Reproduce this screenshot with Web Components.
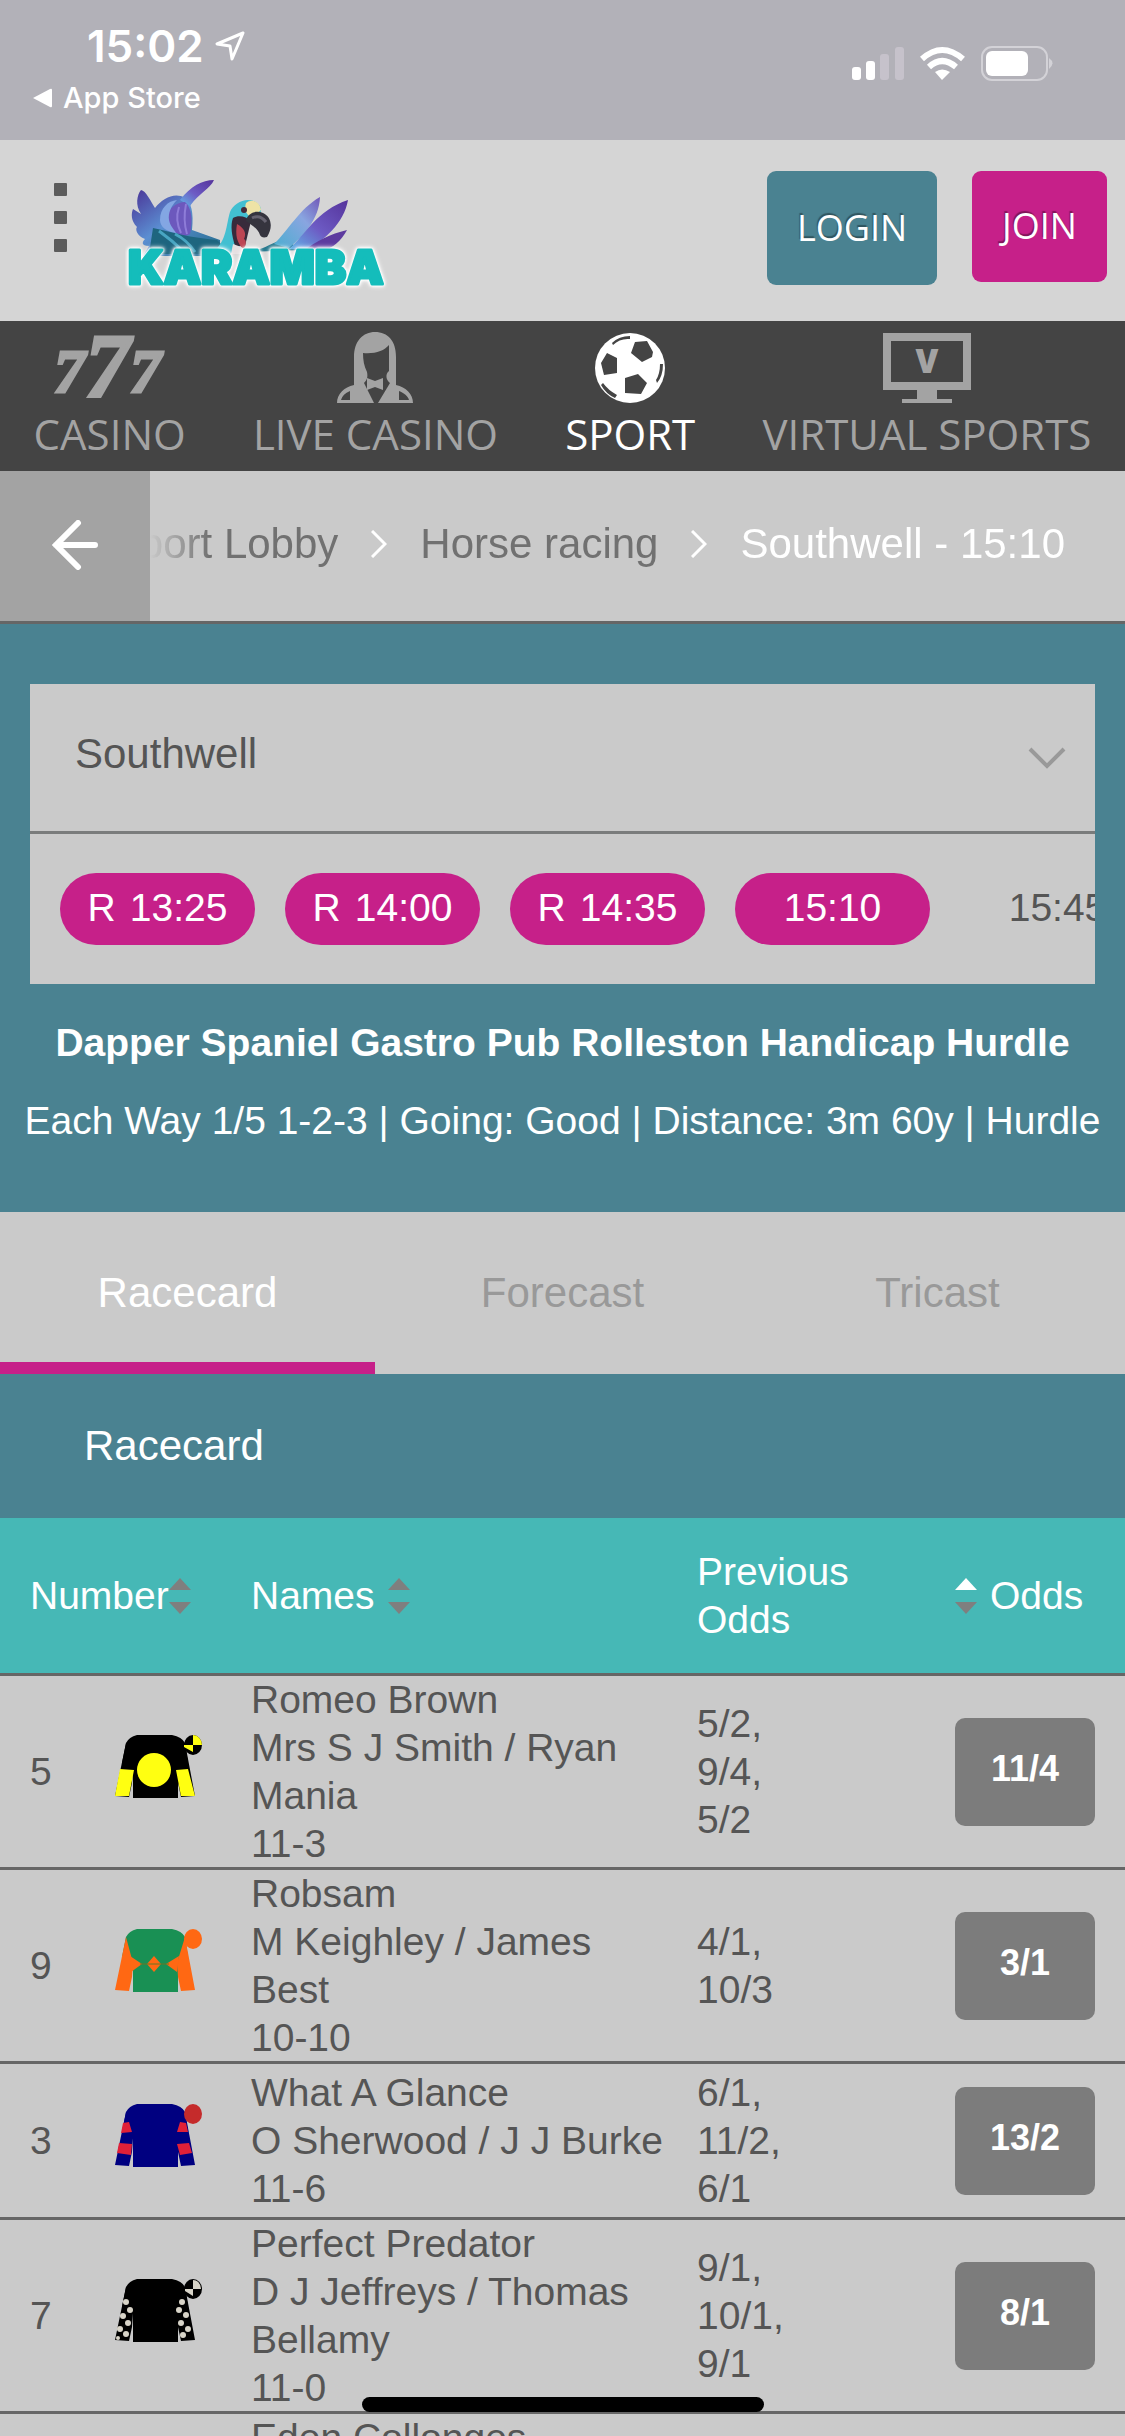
<!DOCTYPE html>
<html lang="en">
    <head>
        <meta charset="UTF-8">
        <meta name="viewport" content="width=device-width, initial-scale=1.0">
        <title>Karamba - Southwell 15:10</title>
        <style>
            html, body {
                margin: 0;
                height: 100%;
            }
            body {
                overflow: hidden;
                background: #cacaca;
                font-family: "Liberation Sans", Arial, sans-serif;
                --teal: #4a8291;
                --aqua: #46b8b6;
                --pink: #c62089;
                --panel: #cacaca;
                --line: #666;
                --text: #555;
            }
        </style>
    </head>
    <body>
        <status-bar time="15:02" back="App Store"></status-bar>
        <site-header></site-header>
        <product-nav>
            <product-link icon="casino">CASINO</product-link>
            <product-link icon="dealer">LIVE CASINO</product-link>
            <product-link icon="ball" active>SPORT</product-link>
            <product-link icon="monitor">VIRTUAL SPORTS</product-link>
        </product-nav>
        <crumb-trail items="Sport Lobby|Horse racing|Southwell - 15:10"></crumb-trail>
        <race-picker course="Southwell" times="R 13:25|R 14:00|R 14:35|15:10|15:45" current="15:10">
            <span slot="title">Dapper Spaniel Gastro Pub Rolleston Handicap Hurdle</span>
            <span slot="details">Each Way 1/5 1-2-3 | Going: Good | Distance: 3m 60y | Hurdle</span>
        </race-picker>
        <race-tabs items="Racecard|Forecast|Tricast"></race-tabs>
        <race-card>Racecard</race-card>
        <home-indicator></home-indicator>

        <script>
            class StatusBar extends HTMLElement {
                connectedCallback() {
                    this.attachShadow({ mode: "open" }).innerHTML = /* html */ `
                        <style>
                            :host {
                                display: flex;
                                justify-content: space-between;
                                align-items: flex-start;
                                box-sizing: border-box;
                                height: 140px;
                                padding: 18px 72px 0 33px;
                                background: #b2b1b8;
                                color: #fff;
                                font-family: Inter, sans-serif;
                            }
                            .clock {
                                display: flex;
                                align-items: center;
                                gap: 11px;
                                padding-left: 54px;
                                font-size: 44px;
                                font-weight: 600;
                                line-height: 56px;
                            }
                            a {
                                display: flex;
                                align-items: center;
                                gap: 10px;
                                margin-top: 8px;
                                color: inherit;
                                font-size: 29px;
                                font-weight: 500;
                                line-height: 32px;
                                text-decoration: none;
                            }
                            .signals {
                                display: flex;
                                gap: 16px;
                                padding-top: 28px;
                            }
                        </style>
                        <div>
                            <div class="clock">${this.getAttribute("time")}
                                <svg width="30" height="30" viewBox="0 0 30 30" fill="none" stroke="#fff" stroke-width="3" stroke-linejoin="round"><path d="M28 2 2 13l13 2 2 13z"/></svg>
                            </div>
                            <a href="#"><svg width="20" height="20" viewBox="0 0 20 20" fill="#fff"><path d="M0 10 17 1q2-1 2 1v16q0 2-2 1z"/></svg>${this.getAttribute("back")}</a>
                        </div>
                        <div class="signals">
                            <svg width="52" height="35" viewBox="0 0 52 35" fill="#fff">
                                <rect y="21" width="9" height="13" rx="3"/>
                                <rect x="14" y="15" width="9" height="19" rx="3"/>
                                <g fill="#c6c2cb"><rect x="28" y="8" width="9" height="26" rx="3"/><rect x="43" y="1" width="9" height="33" rx="3"/></g>
                            </svg>
                            <svg width="45" height="35" viewBox="0 0 45 35" fill="none" stroke="#fff" stroke-width="6">
                                <path d="M2 13Q22 -5 43 13M9 21Q22 9 36 21"/>
                                <path d="M15 26Q22 21 30 26L22 34z" fill="#fff" stroke="none"/>
                            </svg>
                            <svg width="72" height="35" viewBox="0 0 72 35">
                                <rect x="1" y="1" width="65" height="33" rx="10" fill="none" stroke="#d3d2d7" stroke-width="2"/>
                                <rect x="5" y="5" width="42" height="25" rx="6" fill="#fff"/>
                                <path d="M68 12q7 5 0 11z" fill="#d3d2d7"/>
                            </svg>
                        </div>
                    `;
                }
            }

            class KarambaLogo extends HTMLElement {
                connectedCallback() {
                    this.attachShadow({ mode: "open" }).innerHTML = /* html */ `
                        <style>
                            :host { display: block; }
                            svg { display: block; }
                            text {
                                font: 900 47px Inter, sans-serif;
                                fill: #14bdbb;
                                stroke: #14bdbb;
                                stroke-width: 3px;
                                stroke-linejoin: round;
                                filter: drop-shadow(0 0 1px #fff) drop-shadow(0 0 1px #fff) drop-shadow(0 0 2px #fff);
                            }
                        </style>
                        <svg width="268" height="118" viewBox="0 0 268 118" role="img" aria-label="Karamba">
                            <defs>
                                <linearGradient id="wing" x1="0" y1="0" x2="1" y2="1">
                                    <stop offset="0" stop-color="#4a3296"/><stop offset=".45" stop-color="#5b8fd2"/><stop offset="1" stop-color="#216a88"/>
                                </linearGradient>
                                <linearGradient id="feather" x1="1" y1="0" x2="0" y2="1">
                                    <stop offset="0" stop-color="#55339b"/><stop offset=".55" stop-color="#6d5bc4"/><stop offset="1" stop-color="#62b6e8"/>
                                </linearGradient>
                                <linearGradient id="pale" x1="1" y1="0" x2="0" y2="1">
                                    <stop offset="0" stop-color="#7057b8"/><stop offset=".4" stop-color="#89a5e0"/><stop offset="1" stop-color="#4aaed0"/>
                                </linearGradient>
                            </defs>
                            <path d="M16 14c5 1 9 10 14 18 8-10 20-16 30-10 6 4 9 14 7 32l28 10v16H18l6-10c-8 0-7-4-4-7-8-3-10-10-8-12-6-6-6-13-4-18l8 5c-6-9-4-19 0-24z" fill="url(#wing)"/>
                            <path d="M55 24C66 10 77 4 89 4c-4 9-15 13-24 26z" fill="url(#feather)"/>
                            <path d="M38 45c4-12 14-19 22-19 7 6 8 19 5 32-4 3-10 2-13-1-8-1-14-6-14-12z" fill="#6c58bd"/>
                            <path d="M35 44c0-12 8-19 17-20-6 6-9 13-8 20 1 6 5 9 7 13-9-1-16-6-16-13z" fill="#83a6e3"/>
                            <path d="M54 31c-3 9-2 18 2 26M61 28c-2 10-2 20 1 30" fill="none" stroke="#8e7cd8" stroke-width="2"/>
                            <path d="M28 52c18 4 38 10 64 12l14 14H24z" fill="#1e657f"/>
                            <path d="M34 55q14 10 25 21M50 58q12 6 20 18" fill="none" stroke="#48a5c2" stroke-width="3"/>
                            <path d="M88 76c14-11 13-27 17-40 4-10 18-16 27-9 4 3 5 7 3 11l-18 6-3 34z" fill="#42bfd1"/>
                            <path d="M108 42c5-3 13-2 18 3l-6 25h-10c-3-10-5-20-2-28z" fill="#382b3b"/>
                            <path d="M112 48c7 4 10 9 7 15 3 1 2 8-1 10-6-6-8-14-6-25z" fill="#bc4553"/>
                            <path d="M121 27c6-5 14-1 15 7l-9 8c-6-3-8-9-6-15z" fill="#eee3a6"/>
                            <circle cx="119" cy="34" r="3" fill="#452a39"/>
                            <path d="M121 45c1-8 10-11 17-8 9 4 10 15 4 24-4 1-6 0-7-2-2-6-7-9-14-14z" fill="#35343e"/>
                            <path d="M127 42q8-4 14 4" fill="none" stroke="#666370" stroke-width="3"/>
                            <path d="M108 68q12 4 20 10h-22z" fill="#e6dfe1"/>
                            <path d="M124 76c16-3 22-9 35-13l18 11z" fill="#22768c"/>
                            <path d="M149 68c14-13 25-35 46-47-1 23-17 39-31 51z" fill="url(#pale)"/>
                            <path d="M164 73c16-14 28-39 59-49-4 23-24 41-42 50z" fill="url(#feather)"/>
                            <path d="M178 75c14-10 27-17 44-21-6 11-14 18-25 21z" fill="#5d3b9f"/>
                            <text x="3" y="108">KARAMBA</text>
                        </svg>
                    `;
                }
            }

            class SiteHeader extends HTMLElement {
                connectedCallback() {
                    this.attachShadow({ mode: "open" }).innerHTML = /* html */ `
                        <style>
                            :host {
                                display: flex;
                                justify-content: space-between;
                                align-items: flex-start;
                                box-sizing: border-box;
                                height: 181px;
                                padding: 31px 18px 0 54px;
                                background: #d5d5d5;
                            }
                            .brand {
                                display: flex;
                                align-items: flex-start;
                                gap: 58px;
                                padding-top: 5px;
                            }
                            .actions {
                                display: flex;
                                align-items: flex-start;
                                gap: 35px;
                            }
                            button {
                                border: 0;
                                padding: 0;
                                background: none;
                                cursor: pointer;
                            }
                            .action {
                                width: 135px;
                                height: 111px;
                                padding-bottom: 2px;
                                border-radius: 9px;
                                background: var(--pink);
                                color: #fff;
                                font: 36px "Open Sans", sans-serif;
                                text-shadow: -1px -2px 1px rgba(0, 0, 0, .35);
                            }
                            .login {
                                width: 170px;
                                height: 114px;
                                background: var(--teal);
                            }
                        </style>
                        <div class="brand">
                            <button aria-label="Menu">
                                <svg width="13" height="82" viewBox="0 0 13 82" fill="#5c5c5c"><rect y="7" width="13" height="13" rx="1"/><rect y="35" width="13" height="13" rx="1"/><rect y="63" width="13" height="13" rx="1"/></svg>
                            </button>
                            <karamba-logo></karamba-logo>
                        </div>
                        <div class="actions">
                            <button class="action login">LOGIN</button>
                            <button class="action">JOIN</button>
                        </div>
                    `;
                }
            }

            class ProductNav extends HTMLElement {
                connectedCallback() {
                    this.attachShadow({ mode: "open" }).innerHTML = /* html */ `
                        <style>
                            :host { display: block; background: #444; }
                            nav {
                                display: flex;
                                justify-content: space-around;
                                padding: 10px 0 13px;
                            }
                        </style>
                        <nav><slot></slot></nav>
                    `;
                }
            }

            const productIcons = {
                casino: `<svg width="104" height="62" viewBox="0 0 104 62" overflow="visible" fill="currentColor" stroke="currentColor" stroke-width="3" font-family="Liberation Serif" font-weight="700" font-style="italic">
                    <text x="-4" y="55" font-size="62">7<tspan dy="5" font-size="90">7</tspan><tspan dy="-5">7</tspan></text>
                </svg>`,
                dealer: `<svg width="76" height="72" viewBox="0 0 76 72" fill="currentColor" fill-rule="evenodd">
                    <path d="M38 0C51 0 59 9 59 25v28c10 2 17 9 17 18H41l12-20c-4-3-5-9-1-12V13c-5 6-14 9-26 8 0 7 1 13 4 19 1 5 0 8-3 11l10 20H0c0-9 7-16 17-18V25C17 9 26 0 38 0zM13 59c-5 2-8 5-9 9h9zM62 59v9h10c-1-4-5-7-10-9z"/>
                    <path d="M30 46l8 3 8-3v12l-8-3-8 3z"/>
                </svg>`,
                ball: `<svg width="70" height="70" viewBox="0 0 70 70" fill="#444">
                    <circle cx="35" cy="35" r="35" fill="currentColor"/>
                    <path d="M40 9l12-1 6 11-1 5-10 5-11-9zM12 20l10 5v15L9 42 6 30zM30 45l13-4 9 9-6 11-16-1z"/>
                    <path d="M17 10Q24 3 35 3v3Q25 5 18 12zM65 31h3q0 12-6 19l-1-3q4-6 4-16zM8 50q5 7 14 12l-2 3Q11 61 6 52z"/>
                </svg>`,
                monitor: `<svg width="88" height="70" viewBox="0 0 88 70" fill="currentColor" fill-rule="evenodd">
                    <path d="M0 0h88v57H54v9h15v4H19v-4h15v-9H0zM8 8v41h72V8z"/>
                    <text x="44" y="40" font-family="Open Sans" font-size="33" font-weight="800" text-anchor="middle">V</text>
                </svg>`
            };

            class ProductLink extends HTMLElement {
                connectedCallback() {
                    this.attachShadow({ mode: "open" }).innerHTML = /* html */ `
                        <style>
                            :host { display: block; color: #a3a3a3; }
                            :host([active]) { color: #fff; }
                            a {
                                display: flex;
                                flex-direction: column;
                                align-items: center;
                                gap: 5px;
                                color: inherit;
                                font: 42px/48px "Open Sans", sans-serif;
                                text-decoration: none;
                                white-space: nowrap;
                            }
                            .icon {
                                display: flex;
                                align-items: center;
                                height: 74px;
                            }
                        </style>
                        <a href="#"><span class="icon" aria-hidden="true">${productIcons[this.getAttribute("icon")]}</span><slot></slot></a>
                    `;
                }
            }

            class CrumbTrail extends HTMLElement {
                connectedCallback() {
                    const items = this.getAttribute("items").split("|");
                    const arrow = `<svg width="16" height="28" viewBox="0 0 16 28" fill="none" stroke="#fff" stroke-width="3"><path d="M1 1l13 13L1 27"/></svg>`;
                    this.attachShadow({ mode: "open" }).innerHTML = /* html */ `
                        <style>
                            :host {
                                display: flex;
                                height: 150px;
                                border-bottom: 3px solid var(--line);
                                background: var(--panel);
                            }
                            button {
                                flex: none;
                                width: 150px;
                                border: 0;
                                padding: 0;
                                background: #a3a3a3;
                            }
                            nav {
                                display: flex;
                                flex: 1;
                                align-items: center;
                                justify-content: flex-end;
                                gap: 33px;
                                min-width: 0;
                                overflow: hidden;
                                padding: 0 60px 4px 0;
                                -webkit-mask-image: linear-gradient(to right, transparent, #000 60px);
                                mask-image: linear-gradient(to right, transparent, #000 60px);
                            }
                            a {
                                flex: none;
                                color: #717171;
                                font-size: 42px;
                                line-height: 48px;
                                text-decoration: none;
                            }
                            a:last-child { color: #fff; }
                            svg { flex: none; }
                        </style>
                        <button aria-label="Back">
                            <svg width="46" height="50" viewBox="0 0 46 50" fill="none" stroke="#fff" stroke-width="6" stroke-linecap="round"><path d="M43 25H4M26 3L4 25l22 22"/></svg>
                        </button>
                        <nav aria-label="Breadcrumb">${items.map(item => `<a href="#">${item}</a>`).join(arrow)}</nav>
                    `;
                }
            }

            class RacePicker extends HTMLElement {
                connectedCallback() {
                    const current = this.getAttribute("current");
                    const times = this.getAttribute("times").split("|");
                    // Races that have a result (R) and the open race are filled
                    const pills = times.map(time => {
                        const filled = time.startsWith("R") || time === current;
                        return `<button class="${filled ? "filled" : ""}">${time.split(" ").map(part => `<span>${part}</span>`).join(" ")}</button>`;
                    }).join("");
                    this.attachShadow({ mode: "open" }).innerHTML = /* html */ `
                        <style>
                            :host {
                                display: block;
                                box-sizing: border-box;
                                height: 588px;
                                padding: 60px 0 0;
                                background: var(--teal);
                                color: #fff;
                                text-align: center;
                            }
                            .card {
                                margin: 0 30px;
                                background: var(--panel);
                            }
                            .course {
                                display: grid;
                                align-items: center;
                                height: 147px;
                                border-bottom: 3px solid #7a7c7c;
                            }
                            .course > * { grid-area: 1 / 1; }
                            select {
                                width: 100%;
                                height: 147px;
                                appearance: none;
                                border: 0;
                                padding: 0 90px 8px 45px;
                                background: none;
                                color: var(--text);
                                font: 42px/48px "Liberation Sans", Arial, sans-serif;
                            }
                            .course svg {
                                justify-self: end;
                                margin-right: 29px;
                                pointer-events: none;
                            }
                            .times {
                                display: flex;
                                gap: 30px;
                                overflow: hidden;
                                padding: 39px 0 39px 30px;
                            }
                            button {
                                display: flex;
                                flex: none;
                                align-items: center;
                                justify-content: center;
                                gap: 14px;
                                width: 195px;
                                height: 72px;
                                border: 0;
                                border-radius: 36px;
                                padding: 0 0 2px;
                                background: none;
                                color: var(--text);
                                font: 39px/48px "Liberation Sans", Arial, sans-serif;
                            }
                            .filled { background: var(--pink); color: #fff; }
                            h1, p {
                                margin: 0;
                                font-size: 39px;
                                line-height: 48px;
                                white-space: nowrap;
                            }
                            h1 { margin: 35px 0 30px; }
                        </style>
                        <div class="card">
                            <div class="course">
                                <select aria-label="Racecourse"><option>${this.getAttribute("course")}</option></select>
                                <svg width="38" height="22" viewBox="0 0 38 22" fill="none" stroke="#999" stroke-width="4"><path d="M2 2l17 17L36 2"/></svg>
                            </div>
                            <div class="times">${pills}</div>
                        </div>
                        <h1><slot name="title"></slot></h1>
                        <p><slot name="details"></slot></p>
                    `;
                }
            }

            class RaceTabs extends HTMLElement {
                connectedCallback() {
                    const items = this.getAttribute("items").split("|");
                    this.attachShadow({ mode: "open" }).innerHTML = /* html */ `
                        <style>
                            :host { display: block; background: var(--panel); }
                            div { display: grid; grid-template-columns: repeat(3, 1fr); }
                            button {
                                height: 162px;
                                border: 0;
                                padding: 0;
                                background: none;
                                color: #999;
                                font: 42px/48px "Liberation Sans", Arial, sans-serif;
                            }
                            button[aria-selected="true"] {
                                box-shadow: inset 0 -12px var(--pink);
                                color: #fff;
                            }
                        </style>
                        <div role="tablist">
                            ${items.map((item, i) => `<button role="tab" aria-selected="${i === 0}">${item}</button>`).join("")}
                        </div>
                    `;
                }
            }

            const silks = {
                black: { body: "#000", sleeve: "#000", cap: "#000",
                    extra: `<g fill="#ff1"><path d="M5 34l14 1-5 26H0zM61 35l12-1 7 27H66z"/><ellipse cx="39" cy="35" rx="17" ry="17"/><path d="M78 10V0a9 10 0 0 1 9 10zM78 10v7l-9-5v-2z"/></g>` },
                green: { body: "#199054", sleeve: "#ff6813", cap: "#ff6813",
                    extra: `<path d="M39 27l7 8-7 8-7-8zM15 27l12 8-11 8zM64 27l-13 8 11 8z" fill="#ff6813"/><path d="M25 35h29" stroke="#6b7424" stroke-width="1"/>` },
                blue: { body: "#000080", sleeve: "#000080", cap: "#c52b2b",
                    extra: `<path d="M8 19l6-1 3 10-11 1zM62 28l3-10 6 1 2 9zM4 39l13 1-1 11-14-2zM62 40l12-1 3 10-12 2z" fill="#e02038"/>` },
                checked: { body: "#000", sleeve: "#000", cap: "#000",
                    extra: `<g fill="#d8d4c8"><circle cx="11" cy="23" r="3"/><circle cx="15" cy="31" r="3"/><circle cx="8" cy="37" r="3"/><circle cx="13" cy="44" r="3"/><circle cx="5" cy="50" r="3"/><circle cx="11" cy="55" r="3"/><circle cx="3" cy="59" r="2"/><circle cx="67" cy="23" r="3"/><circle cx="64" cy="31" r="3"/><circle cx="71" cy="36" r="3"/><circle cx="66" cy="44" r="3"/><circle cx="73" cy="50" r="3"/><circle cx="68" cy="56" r="3"/><path d="M78 10V1q7 0 8 9zM78 10v7l-8-5v-2z"/></g>` }
            };

            class JockeySilk extends HTMLElement {
                connectedCallback() {
                    const silk = silks[this.getAttribute("colours")];
                    this.attachShadow({ mode: "open" }).innerHTML = /* html */ `
                        <style>
                            :host { display: block; padding-bottom: 12px; }
                            svg { display: block; }
                        </style>
                        <svg width="87" height="63" viewBox="0 0 87 63" aria-hidden="true">
                            <path d="M22 0h35q10 2 13 8l3 20-10 7v28H18V35L7 28l4-20q3-6 11-8z" fill="${silk.body}"/>
                            <path d="M11 8l7 26-1 14-3 14L0 61zM70 8l-8 26 1 14 3 14 14-1z" fill="${silk.sleeve}"/>
                            <ellipse cx="78" cy="10" rx="9" ry="10" fill="${silk.cap}"/>
                            ${silk.extra}
                        </svg>
                    `;
                }
            }

            const runners = [
                { number: 5, silk: "black", name: "Romeo Brown", people: "Mrs S J Smith / Ryan Mania", weight: "11-3", previous: "5/2, 9/4, 5/2", odds: "11/4" },
                { number: 9, silk: "green", name: "Robsam", people: "M Keighley / James Best", weight: "10-10", previous: "4/1, 10/3", odds: "3/1" },
                { number: 3, silk: "blue", name: "What A Glance", people: "O Sherwood / J J Burke", weight: "11-6", previous: "6/1, 11/2, 6/1", odds: "13/2" },
                { number: 7, silk: "checked", name: "Perfect Predator", people: "D J Jeffreys / Thomas Bellamy", weight: "11-0", previous: "9/1, 10/1, 9/1", odds: "8/1" }
            ];

            class RaceCard extends HTMLElement {
                sorter(up = "#7f7f7f") {
                    return `<svg width="22" height="36" viewBox="0 0 22 36" aria-hidden="true"><path d="M11 0l11 12H0z" fill="${up}"/><path d="M0 24h22L11 36z" fill="#7f7f7f"/></svg>`;
                }

                row(runner) {
                    return `
                        <tr>
                            <td class="number">${runner.number}</td>
                            <td><jockey-silk colours="${runner.silk}"></jockey-silk></td>
                            <td class="runner">${runner.name}<br>${runner.people}<br>${runner.weight}</td>
                            <td class="previous">${runner.previous}</td>
                            <td class="odds"><button class="bet">${runner.odds}</button></td>
                        </tr>`;
                }

                connectedCallback() {
                    this.attachShadow({ mode: "open" }).innerHTML = /* html */ `
                        <style>
                            :host { display: block; color: var(--text); }
                            h2 {
                                margin: 0;
                                padding: 48px 84px;
                                background: var(--teal);
                                color: #fff;
                                font-size: 42px;
                                font-weight: 400;
                                line-height: 48px;
                            }
                            table {
                                width: 100%;
                                border-collapse: collapse;
                                table-layout: fixed;
                                font-size: 39px;
                                line-height: 48px;
                            }
                            th, td {
                                height: 154px;
                                padding: 0 0 2px;
                                box-shadow: inset 0 -3px var(--line);
                                text-align: left;
                            }
                            th {
                                height: 156px;
                                background: var(--aqua);
                                color: #fff;
                                font-weight: 400;
                            }
                            button {
                                border: 0;
                                padding: 0;
                                background: none;
                                color: #fff;
                                font: inherit;
                            }
                            .sort { display: flex; align-items: center; }
                            .names { gap: 13px; }
                            .by-odds { gap: 13px; }
                            .number { padding-left: 30px; }
                            .runner { padding-right: 24px; }
                            td.previous { padding-right: 130px; }
                            th.previous { padding-right: 90px; }
                            .odds { padding-right: 30px; }
                            .bet {
                                display: block;
                                width: 100%;
                                height: 108px;
                                border-radius: 10px;
                                padding-bottom: 6px;
                                background: #7c7c7c;
                                font-size: 36px;
                                font-weight: 700;
                            }
                            .next td { vertical-align: top; }
                        </style>
                        <h2><slot></slot></h2>
                        <table>
                            <colgroup>
                                <col style="width: 115px"><col style="width: 136px"><col><col style="width: 258px"><col style="width: 170px">
                            </colgroup>
                            <thead>
                                <tr>
                                    <th class="number" colspan="2"><button class="sort">Number${this.sorter()}</button></th>
                                    <th><button class="sort names">Names${this.sorter()}</button></th>
                                    <th class="previous">Previous Odds</th>
                                    <th class="odds" aria-sort="ascending"><button class="sort by-odds">${this.sorter("#fff")}Odds</button></th>
                                </tr>
                            </thead>
                            <tbody>
                                ${runners.map(this.row).join("")}
                                <tr class="next"><td></td><td></td><td>Eden Collonges</td><td></td><td></td></tr>
                            </tbody>
                        </table>
                    `;
                }
            }

            class HomeIndicator extends HTMLElement {
                connectedCallback() {
                    this.attachShadow({ mode: "open" }).innerHTML = /* html */ `
                        <style>
                            :host {
                                position: fixed;
                                right: 0;
                                bottom: 24px;
                                left: 0;
                                width: 402px;
                                height: 15px;
                                margin: 0 auto;
                                border-radius: 8px;
                                background: #000;
                            }
                        </style>
                    `;
                }
            }

            customElements.define("status-bar", StatusBar);
            customElements.define("karamba-logo", KarambaLogo);
            customElements.define("site-header", SiteHeader);
            customElements.define("product-nav", ProductNav);
            customElements.define("product-link", ProductLink);
            customElements.define("crumb-trail", CrumbTrail);
            customElements.define("race-picker", RacePicker);
            customElements.define("race-tabs", RaceTabs);
            customElements.define("jockey-silk", JockeySilk);
            customElements.define("race-card", RaceCard);
            customElements.define("home-indicator", HomeIndicator);
        </script>
    </body>
</html>
